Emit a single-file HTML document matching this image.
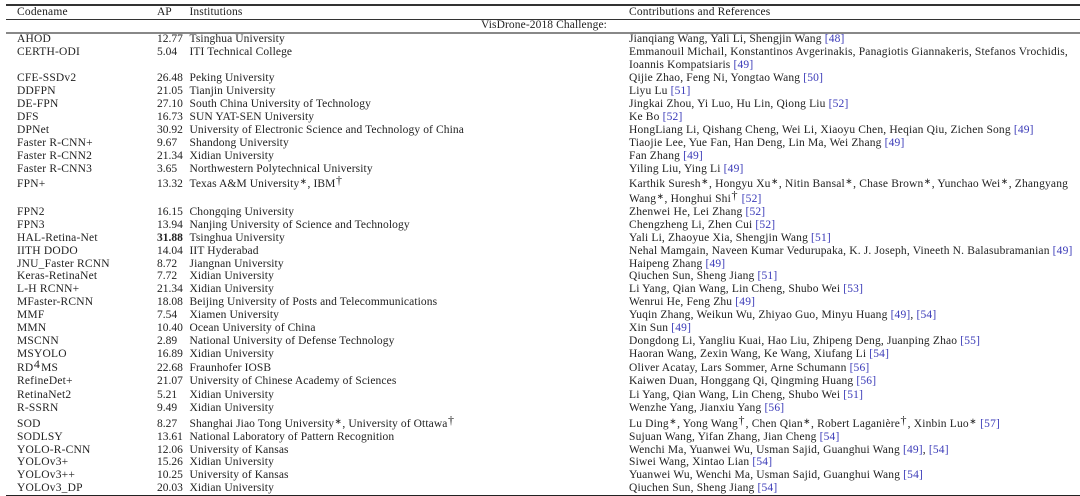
<!DOCTYPE html>
<html><head><meta charset="utf-8"><style>
html,body{margin:0;padding:0;background:#fff}
#p{position:relative;width:1080px;height:496px;overflow:hidden;background:#fff;font-family:"Liberation Serif",serif;font-size:11.5px;color:#222;filter:blur(.35px)}
.r{position:absolute;left:0;width:1080px;height:13px;line-height:13px;white-space:nowrap;margin-top:1px}
.r span{position:absolute;top:0}
.a{left:17px;letter-spacing:.2px}.b{left:157px}.c{left:189.5px;letter-spacing:.1px}.d{left:629px;letter-spacing:.17px}
i{font-style:normal;color:#3a3ab8}
sup{font-size:8.5px;line-height:0;vertical-align:3px;padding:0 .5px}
sup.t{font-size:12px;padding:0 1px 0 .5px}
.l{position:absolute;left:6px;width:1074px;background:#333}
</style></head><body><div id="p">
<div class="l" style="top:4px;height:1.5px"></div>
<div class="l" style="top:19px;height:1px"></div>
<div class="l" style="top:32px;height:2px;background:#888"></div>
<div class="l" style="top:494.5px;height:1.5px;background:#222"></div>
<div class="r" style="top:5px"><span class="a">Codename</span><span class="b">AP</span><span class="c">Institutions</span><span class="d">Contributions and References</span></div>
<div class="r" style="top:18px"><span style="left:481px;letter-spacing:.1px">VisDrone-2018 Challenge:</span></div>
<div class="r" style="top:32px"><span class="a">AHOD</span><span class="b">12.77</span><span class="c">Tsinghua University</span><span class="d">Jianqiang Wang, Yali Li, Shengjin Wang <i>[48]</i></span></div>
<div class="r" style="top:45px"><span class="a">CERTH-ODI</span><span class="b">5.04</span><span class="c">ITI Technical College</span><span class="d">Emmanouil Michail, Konstantinos Avgerinakis, Panagiotis Giannakeris, Stefanos Vrochidis,</span></div>
<div class="r" style="top:58px"><span class="d">Ioannis Kompatsiaris <i>[49]</i></span></div>
<div class="r" style="top:71px"><span class="a">CFE-SSDv2</span><span class="b">26.48</span><span class="c">Peking University</span><span class="d">Qijie Zhao, Feng Ni, Yongtao Wang <i>[50]</i></span></div>
<div class="r" style="top:84px"><span class="a">DDFPN</span><span class="b">21.05</span><span class="c">Tianjin University</span><span class="d">Liyu Lu <i>[51]</i></span></div>
<div class="r" style="top:97px"><span class="a">DE-FPN</span><span class="b">27.10</span><span class="c">South China University of Technology</span><span class="d">Jingkai Zhou, Yi Luo, Hu Lin, Qiong Liu <i>[52]</i></span></div>
<div class="r" style="top:110px"><span class="a">DFS</span><span class="b">16.73</span><span class="c">SUN YAT-SEN University</span><span class="d">Ke Bo <i>[52]</i></span></div>
<div class="r" style="top:123px"><span class="a">DPNet</span><span class="b">30.92</span><span class="c">University of Electronic Science and Technology of China</span><span class="d">HongLiang Li, Qishang Cheng, Wei Li, Xiaoyu Chen, Heqian Qiu, Zichen Song <i>[49]</i></span></div>
<div class="r" style="top:136px"><span class="a">Faster R-CNN+</span><span class="b">9.67</span><span class="c">Shandong University</span><span class="d">Tiaojie Lee, Yue Fan, Han Deng, Lin Ma, Wei Zhang <i>[49]</i></span></div>
<div class="r" style="top:149px"><span class="a">Faster R-CNN2</span><span class="b">21.34</span><span class="c">Xidian University</span><span class="d">Fan Zhang <i>[49]</i></span></div>
<div class="r" style="top:162px"><span class="a">Faster R-CNN3</span><span class="b">3.65</span><span class="c">Northwestern Polytechnical University</span><span class="d">Yiling Liu, Ying Li <i>[49]</i></span></div>
<div class="r" style="top:177px"><span class="a">FPN+</span><span class="b">13.32</span><span class="c">Texas A&amp;M University<sup>∗</sup>, IBM<sup class="t">†</sup></span><span class="d">Karthik Suresh<sup>∗</sup>, Hongyu Xu<sup>∗</sup>, Nitin Bansal<sup>∗</sup>, Chase Brown<sup>∗</sup>, Yunchao Wei<sup>∗</sup>, Zhangyang</span></div>
<div class="r" style="top:192px"><span class="d">Wang<sup>∗</sup>, Honghui Shi<sup class="t">†</sup> <i>[52]</i></span></div>
<div class="r" style="top:205px"><span class="a">FPN2</span><span class="b">16.15</span><span class="c">Chongqing University</span><span class="d">Zhenwei He, Lei Zhang <i>[52]</i></span></div>
<div class="r" style="top:218px"><span class="a">FPN3</span><span class="b">13.94</span><span class="c">Nanjing University of Science and Technology</span><span class="d">Chengzheng Li, Zhen Cui <i>[52]</i></span></div>
<div class="r" style="top:231px"><span class="a">HAL-Retina-Net</span><span class="b"><b>31.88</b></span><span class="c">Tsinghua University</span><span class="d">Yali Li, Zhaoyue Xia, Shengjin Wang <i>[51]</i></span></div>
<div class="r" style="top:244px"><span class="a">IITH DODO</span><span class="b">14.04</span><span class="c">IIT Hyderabad</span><span class="d">Nehal Mamgain, Naveen Kumar Vedurupaka, K. J. Joseph, Vineeth N. Balasubramanian <i>[49]</i></span></div>
<div class="r" style="top:257px"><span class="a">JNU_Faster RCNN</span><span class="b">8.72</span><span class="c">Jiangnan University</span><span class="d">Haipeng Zhang <i>[49]</i></span></div>
<div class="r" style="top:269px"><span class="a">Keras-RetinaNet</span><span class="b">7.72</span><span class="c">Xidian University</span><span class="d">Qiuchen Sun, Sheng Jiang <i>[51]</i></span></div>
<div class="r" style="top:282px"><span class="a">L-H RCNN+</span><span class="b">21.34</span><span class="c">Xidian University</span><span class="d">Li Yang, Qian Wang, Lin Cheng, Shubo Wei <i>[53]</i></span></div>
<div class="r" style="top:295px"><span class="a">MFaster-RCNN</span><span class="b">18.08</span><span class="c">Beijing University of Posts and Telecommunications</span><span class="d">Wenrui He, Feng Zhu <i>[49]</i></span></div>
<div class="r" style="top:308px"><span class="a">MMF</span><span class="b">7.54</span><span class="c">Xiamen University</span><span class="d">Yuqin Zhang, Weikun Wu, Zhiyao Guo, Minyu Huang <i>[49]</i>, <i>[54]</i></span></div>
<div class="r" style="top:321px"><span class="a">MMN</span><span class="b">10.40</span><span class="c">Ocean University of China</span><span class="d">Xin Sun <i>[49]</i></span></div>
<div class="r" style="top:334px"><span class="a">MSCNN</span><span class="b">2.89</span><span class="c">National University of Defense Technology</span><span class="d">Dongdong Li, Yangliu Kuai, Hao Liu, Zhipeng Deng, Juanping Zhao <i>[55]</i></span></div>
<div class="r" style="top:347px"><span class="a">MSYOLO</span><span class="b">16.89</span><span class="c">Xidian University</span><span class="d">Haoran Wang, Zexin Wang, Ke Wang, Xiufang Li <i>[54]</i></span></div>
<div class="r" style="top:361px"><span class="a">RD<sup class="t">4</sup>MS</span><span class="b">22.68</span><span class="c">Fraunhofer IOSB</span><span class="d">Oliver Acatay, Lars Sommer, Arne Schumann <i>[56]</i></span></div>
<div class="r" style="top:374px"><span class="a">RefineDet+</span><span class="b">21.07</span><span class="c">University of Chinese Academy of Sciences</span><span class="d">Kaiwen Duan, Honggang Qi, Qingming Huang <i>[56]</i></span></div>
<div class="r" style="top:388px"><span class="a">RetinaNet2</span><span class="b">5.21</span><span class="c">Xidian University</span><span class="d">Li Yang, Qian Wang, Lin Cheng, Shubo Wei <i>[51]</i></span></div>
<div class="r" style="top:401px"><span class="a">R-SSRN</span><span class="b">9.49</span><span class="c">Xidian University</span><span class="d">Wenzhe Yang, Jianxiu Yang <i>[56]</i></span></div>
<div class="r" style="top:417px"><span class="a">SOD</span><span class="b">8.27</span><span class="c">Shanghai Jiao Tong University<sup>∗</sup>, University of Ottawa<sup class="t">†</sup></span><span class="d">Lu Ding<sup>∗</sup>, Yong Wang<sup class="t">†</sup>, Chen Qian<sup>∗</sup>, Robert Laganière<sup class="t">†</sup>, Xinbin Luo<sup>∗</sup> <i>[57]</i></span></div>
<div class="r" style="top:430px"><span class="a">SODLSY</span><span class="b">13.61</span><span class="c">National Laboratory of Pattern Recognition</span><span class="d">Sujuan Wang, Yifan Zhang, Jian Cheng <i>[54]</i></span></div>
<div class="r" style="top:443px"><span class="a">YOLO-R-CNN</span><span class="b">12.06</span><span class="c">University of Kansas</span><span class="d">Wenchi Ma, Yuanwei Wu, Usman Sajid, Guanghui Wang <i>[49]</i>, <i>[54]</i></span></div>
<div class="r" style="top:455px"><span class="a">YOLOv3+</span><span class="b">15.26</span><span class="c">Xidian University</span><span class="d">Siwei Wang, Xintao Lian <i>[54]</i></span></div>
<div class="r" style="top:468px"><span class="a">YOLOv3++</span><span class="b">10.25</span><span class="c">University of Kansas</span><span class="d">Yuanwei Wu, Wenchi Ma, Usman Sajid, Guanghui Wang <i>[54]</i></span></div>
<div class="r" style="top:481px"><span class="a">YOLOv3_DP</span><span class="b">20.03</span><span class="c">Xidian University</span><span class="d">Qiuchen Sun, Sheng Jiang <i>[54]</i></span></div>
</div></body></html>
